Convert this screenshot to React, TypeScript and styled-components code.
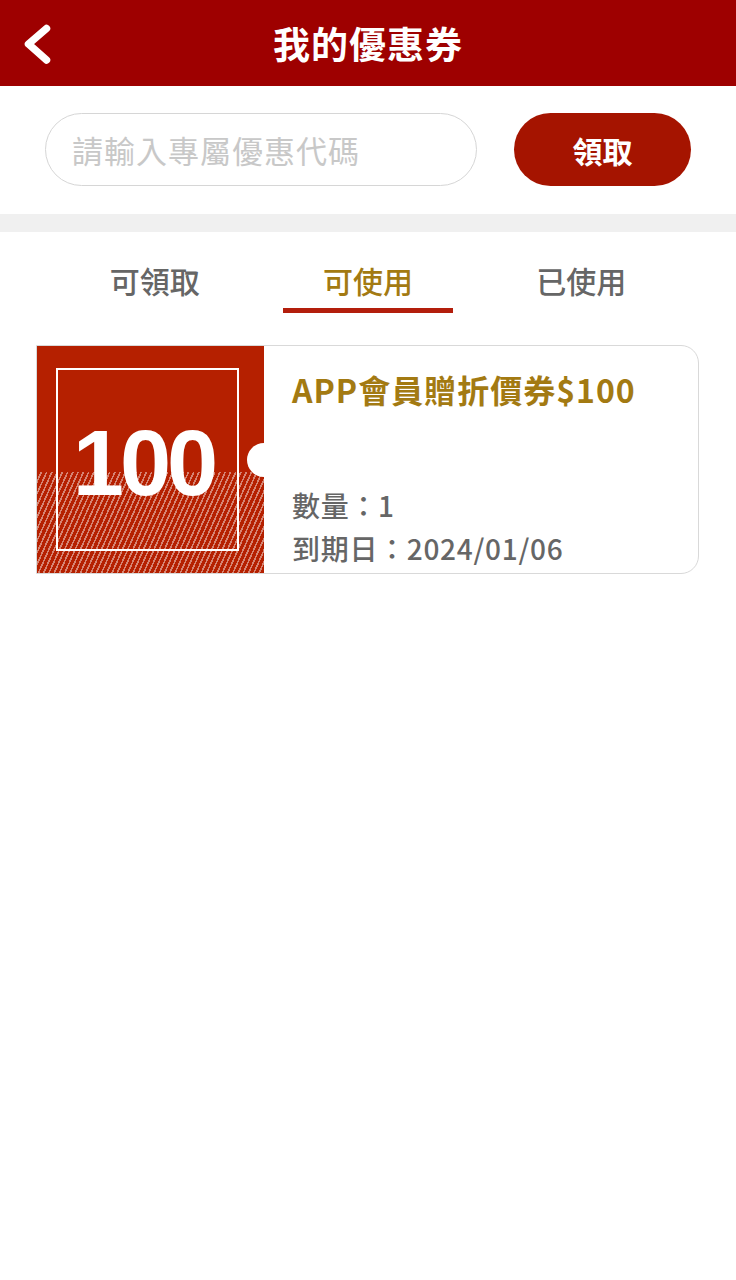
import React, { useState } from "react";
import styled, { createGlobalStyle } from "styled-components";

const Colors = {
  header: "#9e0000",
  button: "#a51400",
  coupon: "#b52000",
  underline: "#b31e0c",
  gold: "#a37a12",
  gray: "#666666",
  border: "#d9d9d9",
  divider: "#f0f0f0",
};

const GlobalStyle = createGlobalStyle`
  html, body {
    margin: 0;
    padding: 0;
    background: #ffffff;
    font-family: "Noto Sans CJK TC", "Noto Sans", sans-serif;
  }
  * {
    box-sizing: border-box;
  }
`;

const tabs = ["可領取", "可使用", "已使用"];

const BackIcon = () => (
  <svg width="60" height="86" viewBox="0 0 60 86">
    <path
      d="M46.5 28.5 L28.5 44 L46.5 60"
      fill="none"
      stroke="#ffffff"
      strokeWidth="7.5"
      strokeLinecap="round"
      strokeLinejoin="round"
    />
  </svg>
);

const Coupon = () => (
  <CouponCard>
    <CouponFace>
      <FaceFrame>
        <FaceValue>100</FaceValue>
      </FaceFrame>
      <Notch />
    </CouponFace>
    <CouponBody>
      <CouponTitle>APP會員贈折價券$100</CouponTitle>
      <div>
        <CouponInfo>數量：1</CouponInfo>
        <CouponInfo>到期日：2024/01/06</CouponInfo>
      </div>
    </CouponBody>
  </CouponCard>
);

export default function App() {
  const [active, setActive] = useState(1);
  const [code, setCode] = useState("");

  return (
    <Page>
      <GlobalStyle />
      <Header>
        <BackButton>
          <BackIcon />
        </BackButton>
        <HeaderTitle>我的優惠券</HeaderTitle>
      </Header>
      <SearchRow>
        <CodeInput
          placeholder="請輸入專屬優惠代碼"
          value={code}
          onChange={(e) => setCode(e.currentTarget.value)}
        />
        <ClaimButton>領取</ClaimButton>
      </SearchRow>
      <Divider />
      <TabBar>
        {tabs.map((t, i) => (
          <Tab key={t} onClick={() => setActive(i)}>
            <TabLabel $active={i === active}>{t}</TabLabel>
            <TabLine $active={i === active} />
          </Tab>
        ))}
      </TabBar>
      <CouponList>
        <Coupon />
      </CouponList>
    </Page>
  );
}

const Page = styled.div`
  width: 736px;
  min-height: 1280px;
  background: #ffffff;
`;

const Header = styled.header`
  position: relative;
  height: 86px;
  background: ${Colors.header};
  display: flex;
  align-items: center;
  justify-content: center;
`;

const BackButton = styled.button`
  position: absolute;
  left: 0;
  top: 0;
  width: 60px;
  height: 86px;
  padding: 0;
  border: 0;
  background: none;
  display: flex;
`;

const HeaderTitle = styled.h1`
  margin: 0;
  color: #ffffff;
  font-size: 37px;
  font-weight: 700;
  letter-spacing: 1px;
  line-height: 1;
`;

const SearchRow = styled.div`
  display: flex;
  align-items: center;
  gap: 37px;
  padding: 27px 45px 28px 45px;
`;

const CodeInput = styled.input`
  width: 432px;
  height: 73px;
  padding: 0 0 0 26px;
  border: 1.5px solid #d6d6d6;
  border-radius: 37px;
  font-family: inherit;
  font-size: 31px;
  letter-spacing: 1px;
  color: #333;
  outline: none;

  &::placeholder {
    color: #c8c8c8;
  }
`;

const ClaimButton = styled.button`
  width: 177px;
  height: 73px;
  border: 0;
  border-radius: 37px;
  background: ${Colors.button};
  color: #ffffff;
  font-family: inherit;
  font-size: 30px;
  font-weight: 700;
`;

const Divider = styled.div`
  height: 18px;
  background: ${Colors.divider};
`;

const TabBar = styled.nav`
  display: grid;
  grid-template-columns: repeat(3, 1fr);
  padding: 30px 48px 0 48px;
`;

const Tab = styled.div`
  display: flex;
  flex-direction: column;
  align-items: center;
  cursor: pointer;
`;

const TabLabel = styled.span<{ $active: boolean }>`
  font-size: 30px;
  line-height: 36px;
  font-weight: 500;
  color: ${(p) => (p.$active ? Colors.gold : Colors.gray)};
`;

const TabLine = styled.div<{ $active: boolean }>`
  margin-top: 10px;
  width: 170px;
  height: 5px;
  background: ${(p) => (p.$active ? Colors.underline : "transparent")};
`;

const CouponList = styled.div`
  display: flex;
  flex-direction: column;
  gap: 24px;
  padding: 32px 37px 0 36px;
`;

const CouponCard = styled.div`
  display: flex;
  height: 229px;
  border: 1.5px solid ${Colors.border};
  border-radius: 0 18px 18px 0;
  overflow: hidden;
`;

const CouponFace = styled.div`
  position: relative;
  flex: 0 0 227px;
  background: ${Colors.coupon};
  padding: 22px 0 0 19px;

  &::after {
    content: "";
    position: absolute;
    left: 0;
    right: 0;
    bottom: 0;
    height: 101px;
    background: repeating-linear-gradient(
      114deg,
      transparent 0px,
      transparent 3.2px,
      rgba(255, 255, 255, 0.45) 3.2px,
      rgba(255, 255, 255, 0.45) 4.8px
    );
  }
`;

const FaceFrame = styled.div`
  position: relative;
  z-index: 1;
  width: 183px;
  height: 183px;
  border: 2px solid #ffffff;
  display: flex;
  align-items: center;
  justify-content: center;
`;

const FaceValue = styled.span`
  font-family: "Liberation Sans", Arial, sans-serif;
  font-size: 92px;
  font-weight: 700;
  letter-spacing: -4px;
  line-height: 1;
  color: #ffffff;
  margin: 6px 8px 0 0;
`;

const Notch = styled.div`
  position: absolute;
  z-index: 2;
  right: -17px;
  top: 97px;
  width: 34px;
  height: 34px;
  border-radius: 50%;
  background: #ffffff;
`;

const CouponBody = styled.div`
  flex: 1;
  display: flex;
  flex-direction: column;
  justify-content: space-between;
  padding: 23px 20px 3px 28px;
`;

const CouponTitle = styled.div`
  font-size: 32px;
  line-height: 40px;
  font-weight: 700;
  letter-spacing: 1px;
  color: ${Colors.gold};
`;

const CouponInfo = styled.div`
  font-size: 28px;
  line-height: 43px;
  font-weight: 500;
  letter-spacing: 0.7px;
  color: ${Colors.gray};
`;
